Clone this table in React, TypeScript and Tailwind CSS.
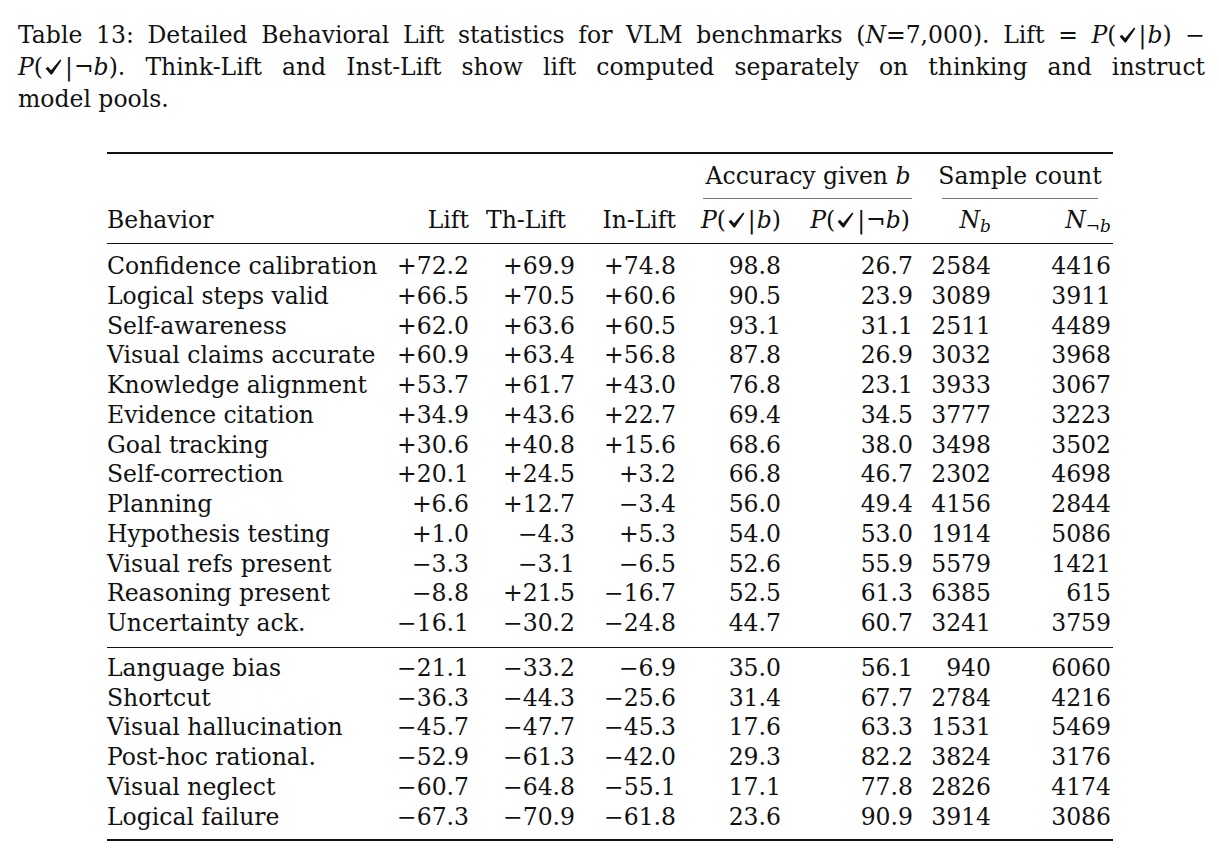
import { FunctionComponent, ReactNode } from "react";

type Row = [string, string, string, string, string, string, string, string];

const groupOne: Row[] = [
  ["Confidence calibration", "+72.2", "+69.9", "+74.8", "98.8", "26.7", "2584", "4416"],
  ["Logical steps valid", "+66.5", "+70.5", "+60.6", "90.5", "23.9", "3089", "3911"],
  ["Self-awareness", "+62.0", "+63.6", "+60.5", "93.1", "31.1", "2511", "4489"],
  ["Visual claims accurate", "+60.9", "+63.4", "+56.8", "87.8", "26.9", "3032", "3968"],
  ["Knowledge alignment", "+53.7", "+61.7", "+43.0", "76.8", "23.1", "3933", "3067"],
  ["Evidence citation", "+34.9", "+43.6", "+22.7", "69.4", "34.5", "3777", "3223"],
  ["Goal tracking", "+30.6", "+40.8", "+15.6", "68.6", "38.0", "3498", "3502"],
  ["Self-correction", "+20.1", "+24.5", "+3.2", "66.8", "46.7", "2302", "4698"],
  ["Planning", "+6.6", "+12.7", "\u22123.4", "56.0", "49.4", "4156", "2844"],
  ["Hypothesis testing", "+1.0", "\u22124.3", "+5.3", "54.0", "53.0", "1914", "5086"],
  ["Visual refs present", "\u22123.3", "\u22123.1", "\u22126.5", "52.6", "55.9", "5579", "1421"],
  ["Reasoning present", "\u22128.8", "+21.5", "\u221216.7", "52.5", "61.3", "6385", "615"],
  ["Uncertainty ack.", "\u221216.1", "\u221230.2", "\u221224.8", "44.7", "60.7", "3241", "3759"],
];

const groupTwo: Row[] = [
  ["Language bias", "\u221221.1", "\u221233.2", "\u22126.9", "35.0", "56.1", "940", "6060"],
  ["Shortcut", "\u221236.3", "\u221244.3", "\u221225.6", "31.4", "67.7", "2784", "4216"],
  ["Visual hallucination", "\u221245.7", "\u221247.7", "\u221245.3", "17.6", "63.3", "1531", "5469"],
  ["Post-hoc rational.", "\u221252.9", "\u221261.3", "\u221242.0", "29.3", "82.2", "3824", "3176"],
  ["Visual neglect", "\u221260.7", "\u221264.8", "\u221255.1", "17.1", "77.8", "2826", "4174"],
  ["Logical failure", "\u221267.3", "\u221270.9", "\u221261.8", "23.6", "90.9", "3914", "3086"],
];

const cols = "grid grid-cols-[273px_89px_106px_101px_105px_132px_78px_120px]";

// amssymb-style checkmark: heavy short left arm, tapering long right arm
const Check = () => (
  <svg
    viewBox="0 0 17 16"
    className="inline-block align-baseline w-[17px] h-[16px] ml-[2px]"
    fill="currentColor"
  >
    <path d="M0.6 9.4 L2.9 7.7 L6.1 11.2 L15.2 0.6 L16.4 1.5 L7.0 15.6 L5.7 15.6 Z" />
  </svg>
);

const Prob: FunctionComponent<{ neg?: boolean }> = ({ neg }) => (
  <span className="whitespace-nowrap">
    <i>P</i>(<Check />
    <span className="ml-[3px] mr-[1px]">|</span>
    {neg && "\u00ac"}
    <i>b</i>)
  </span>
);

const DataRows: FunctionComponent<{ rows: Row[] }> = ({ rows }) => (
  <div>
    {rows.map((r) => (
      <div key={r[0]} className={`${cols} h-[29.75px] leading-[29.75px]`}>
        <div className="whitespace-nowrap">{r[0]}</div>
        {r.slice(1).map((v, i) => (
          <div key={i} className="text-right whitespace-nowrap">
            {v}
          </div>
        ))}
      </div>
    ))}
  </div>
);

const Line: FunctionComponent<{ children: ReactNode; last?: boolean }> = ({ children, last }) => (
  <div
    className={
      last
        ? "whitespace-nowrap"
        : "whitespace-nowrap text-justify [text-align-last:justify]"
    }
  >
    {children}
  </div>
);

export default function App() {
  return (
    <div className="w-[1219px] h-[861px] bg-white text-[#111] font-['DejaVu_Serif',serif] text-[23.5px] overflow-hidden">
      <div className="pl-[18px] pr-[14px] pt-[19px] leading-[32px]">
        <Line>
          Table 13: Detailed Behavioral Lift statistics for VLM benchmarks (<i>N</i>=7,000). Lift ={" "}
          <Prob /> {"\u2212"}
        </Line>
        <Line>
          <Prob neg />. Think-Lift and Inst-Lift show lift computed separately on thinking and instruct
        </Line>
        <Line last>model pools.</Line>
      </div>

      <div className="ml-[107px] mt-[37px] w-[1006px]">
        <div className="h-[2px] bg-[#111]" />

        <div className={`${cols} mt-[7px] h-[30px] leading-[30px]`}>
          <div className="col-span-4" />
          <div className="col-span-2 pl-[27px] text-center whitespace-nowrap">
            Accuracy given <i>b</i>
          </div>
          <div className="col-span-2 pl-[16px] text-center whitespace-nowrap">Sample count</div>
        </div>

        <div className={`${cols} mt-[7px] h-[1px]`}>
          <div className="col-span-4" />
          <div className="col-span-2 ml-[27px] mr-[1px] bg-[#777]" />
          <div className="col-span-2 ml-[29px] mr-[13px] bg-[#777]" />
        </div>

        <div className={`${cols} mt-[6px] h-[30px] leading-[30px]`}>
          <div>Behavior</div>
          <div className="text-right">Lift</div>
          <div className="text-right pr-[9px]">Th-Lift</div>
          <div className="text-right">In-Lift</div>
          <div className="text-right">
            <Prob />
          </div>
          <div className="text-right pr-[3px]">
            <Prob neg />
          </div>
          <div className="text-right">
            <i>N</i>
            <sub className="text-[17px] italic">b</sub>
          </div>
          <div className="text-right">
            <i>N</i>
            <sub className="text-[17px]">
              {"\u00ac"}
              <i>b</i>
            </sub>
          </div>
        </div>

        <div className="mt-[8px] h-[1px] bg-[#111]" />
        <div className="mt-[8px]">
          <DataRows rows={groupOne} />
        </div>
        <div className="mt-[8px] h-[1px] bg-[#111]" />
        <div className="mt-[6px]">
          <DataRows rows={groupTwo} />
        </div>
        <div className="mt-[6.5px] h-[2px] bg-[#111]" />
      </div>
    </div>
  );
}
